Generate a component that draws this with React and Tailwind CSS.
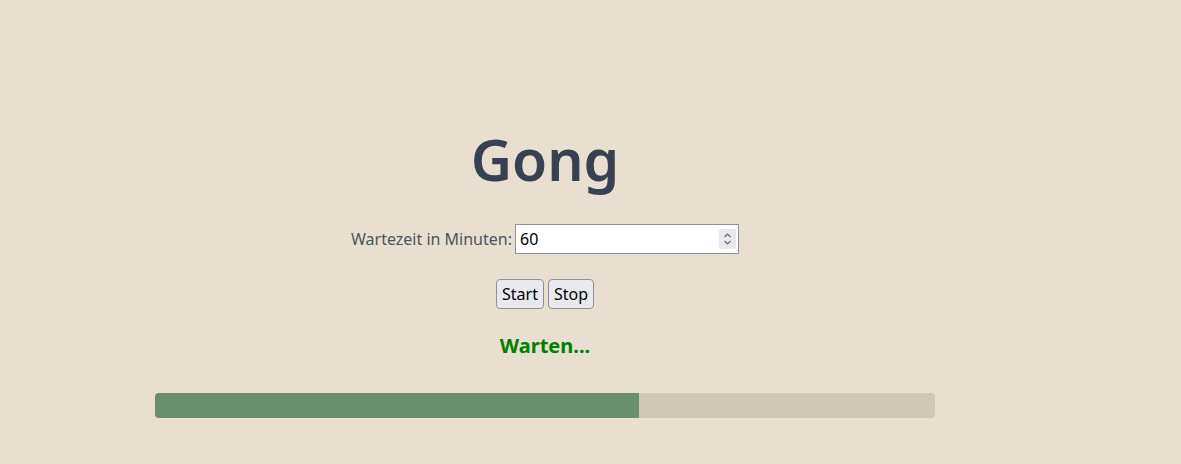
import React from "react";

export default function App() {
  const progress = 62;
  return (
    <div className="min-h-[464px] w-full bg-[#e8dfd0] font-['Noto_Sans',sans-serif]">
      <div className="w-[1090px] flex flex-col items-center pt-[121px]">
        <h1 className="text-[57px] leading-[77px] font-semibold text-[#374151] m-0">Gong</h1>

        <div className="mt-[26px] flex items-center gap-[3px]">
          <label className="text-[16px] text-[#4b5563]">Wartezeit in Minuten:</label>
          <div className="relative">
            <input
              type="text"
              defaultValue="60"
              className="w-[224px] h-[30px] bg-white border border-[#8f8f9d] px-[4px] text-[16px] text-black outline-none"
            />
            <div className="absolute right-[3px] top-[5px] w-[17px] h-[20px] bg-[#e9e9ed] rounded-[2px] flex items-center justify-center">
              <svg width="9" height="14" viewBox="0 0 9 14" fill="none" stroke="#6b6b73" strokeWidth="1.2">
                <path d="M1.5 5 L4.5 2 L7.5 5" />
                <path d="M1.5 9 L4.5 12 L7.5 9" />
              </svg>
            </div>
          </div>
        </div>

        <div className="mt-[25px] flex gap-[4px]">
          <button className="h-[30px] px-[5px] bg-[#e9e9ed] border border-[#8f8f9d] rounded-[4px] text-[16px] text-black">Start</button>
          <button className="h-[30px] px-[5px] bg-[#e9e9ed] border border-[#8f8f9d] rounded-[4px] text-[16px] text-black">Stop</button>
        </div>

        <div className="mt-[22px] text-[20px] font-bold text-[#008000]">Warten...</div>

        <div className="mt-[32px] w-[780px] h-[25px] bg-[#cfc6b5] rounded-[4px] overflow-hidden">
          <div className="h-full bg-[#6a8f6f]" style={{ width: `${progress}%` }} />
        </div>
      </div>
    </div>
  );
}
